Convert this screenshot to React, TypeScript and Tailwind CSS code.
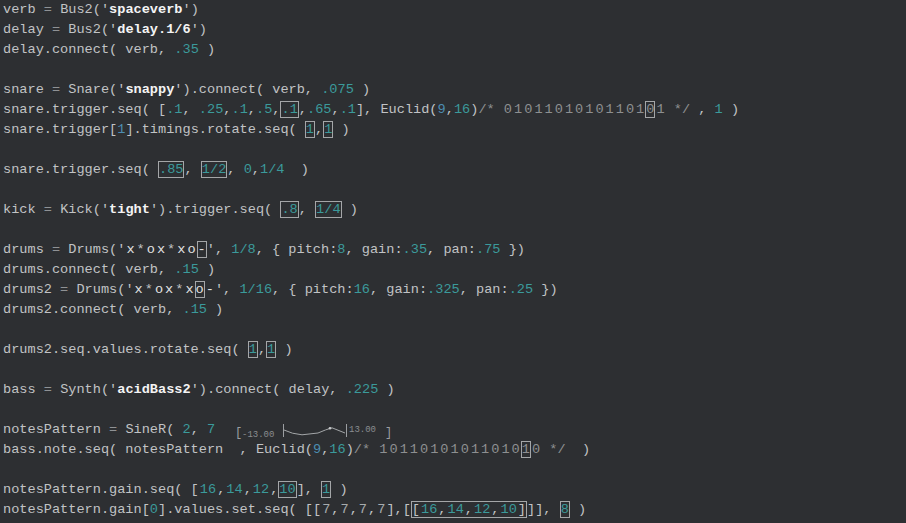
import clsx from "clsx";

type Kind = "d" | "n" | "b" | "s" | "p" | "c" | "g" | "o";
type Tok = { t?: string; k?: Kind; box?: boolean; cell?: boolean; sub?: Seg[] };
type Seg = string | Tok;

const tone: Record<Kind, string> = {
  d: "text-[#c1c3c5]",
  n: "text-[#3b9a9b]",
  b: "text-[#4c8eb2]",
  s: "text-[#f4f4f4] font-bold",
  p: "text-[#e2e2e2]",
  c: "text-[#8d8f91]",
  g: "text-[#a7abad]",
  o: "text-[#8f9295]",
};

const EQ: Tok = { t: "=", k: "o" };
const s = (t: string): Tok => ({ t, k: "s" });
const n = (t: string): Tok => ({ t, k: "n" });
const b = (t: string): Tok => ({ t, k: "b" });
const bx = (t: string): Tok => ({ t, k: "n", box: true });
const cl = (t: string): Tok => ({ t, k: "n", cell: true });
const cg = (t: string): Tok => ({ t, k: "g", cell: true });

// euclid annotation: every digit sits in its own 1px cell, the playing one is boxed
const comment = (bits: string, active: number): Seg[] => [
  { t: "/* ", k: "c" },
  ...bits.split("").map((d, i) => ({ t: d, k: "c" as Kind, box: i === active, cell: i !== active })),
  { t: " */", k: "c" },
];

const pattern = (str: string, active: number): Seg[] =>
  str.split("").map((ch, i) => ({
    t: ch,
    k: (ch === "*" ? "d" : "p") as Kind,
    box: i === active,
    cell: i !== active,
  }));

const lines: (Seg[] | "widget")[] = [
  ["verb ", EQ, " Bus2('", s("spaceverb"), "')"],
  ["delay ", EQ, " Bus2('", s("delay.1/6"), "')"],
  ["delay.connect( verb, ", n(".35"), " )"],
  [],
  ["snare ", EQ, " Snare('", s("snappy"), "').connect( verb, ", n(".075"), " )"],
  [
    "snare.trigger.seq( [", n(".1"), ", ", n(".25"), ",", n(".1"), ",", n(".5"), ",", bx(".1"), ",", n(".65"), ",", n(".1"),
    "], Euclid(", b("9"), ",", n("16"), ")", ...comment("0101101010110101", 14), " , ", n("1"), " )",
  ],
  ["snare.trigger[", b("1"), "].timings.rotate.seq( ", bx("1"), ",", bx("1"), " )"],
  [],
  ["snare.trigger.seq( ", bx(".85"), ", ", bx("1/2"), ", ", n("0"), ",", n("1/4"), "  )"],
  [],
  ["kick ", EQ, " Kick('", s("tight"), "').trigger.seq( ", bx(".8"), ", ", bx("1/4"), " )"],
  [],
  [
    "drums ", EQ, " Drums('", ...pattern("x*ox*xo-", 7), "', ", n("1/8"), ", { pitch:", n("8"), ", gain:", n(".35"),
    ", pan:", n(".75"), " })",
  ],
  ["drums.connect( verb, ", n(".15"), " )"],
  [
    "drums2 ", EQ, " Drums('", ...pattern("x*ox*xo-", 6), "', ", n("1/16"), ", { pitch:", n("16"), ", gain:", n(".325"),
    ", pan:", n(".25"), " })",
  ],
  ["drums2.connect( verb, ", n(".15"), " )"],
  [],
  ["drums2.seq.values.rotate.seq( ", bx("1"), ",", bx("1"), " )"],
  [],
  ["bass ", EQ, " Synth('", s("acidBass2"), "').connect( delay, ", n(".225"), " )"],
  [],
  "widget",
  [
    "bass.note.seq( notesPattern  , Euclid(", b("9"), ",", n("16"), ")", ...comment("1011010101101010", 14), "  )",
  ],
  [],
  ["notesPattern.gain.seq( [", cl("16"), ",", cl("14"), ",", cl("12"), ",", bx("10"), "], ", bx("1"), " )"],
  [
    "notesPattern.gain[", n("0"), "].values.set.seq( [[", cg("7"), ",", cg("7"), ",", cg("7"), ",", cg("7"), "],[",
    { box: true, sub: ["[", cl("16"), ",", cl("14"), ",", cl("12"), ",", cl("10"), "]"] },
    "]], ", bx("8"), " )",
  ],
];

function Piece({ seg }: { seg: Seg }) {
  if (typeof seg === "string") return <span>{seg}</span>;
  return (
    <span
      className={clsx(
        tone[seg.k ?? "d"],
        seg.box && "border border-[#a4a6a8]",
        seg.cell && "border border-transparent"
      )}
    >
      {seg.sub ? seg.sub.map((x, i) => <Piece key={i} seg={x} />) : seg.t}
    </span>
  );
}

// SineR sparkline that gibber draws in place of the closing paren
function SineWidget() {
  return (
    <svg width="162" height="20" viewBox="0 0 162 20" className="inline-block align-top">
      <g fontFamily="'Liberation Mono', monospace" fill="#9b9ea1">
        <text x="3" y="16" fontSize="12">[</text>
        <text x="10" y="16.5" fontSize="9" fill="#8a8d90">-13.00</text>
        <text x="117" y="12" fontSize="9" fill="#8a8d90">13.00</text>
        <text x="153" y="16" fontSize="12">]</text>
      </g>
      <line x1="51.5" y1="4" x2="51.5" y2="17" stroke="#9b9ea1" />
      <line x1="114.5" y1="4" x2="114.5" y2="17" stroke="#9b9ea1" />
      <path d="M52 10 Q60 14 70 14.8 L86 13 Q94 9.5 100 7.8 L113 13" stroke="#a3a6a8" strokeWidth="1" fill="none" />
      <circle cx="98" cy="8.2" r="1.3" fill="#c8cacc" />
    </svg>
  );
}

export default function App() {
  return (
    <div className="w-[906px] h-[523px] overflow-hidden bg-[#2d2f32] pl-[3px] font-['Liberation_Mono',monospace] text-[13.6px] leading-[20px] text-[#c1c3c5]">
      {lines.map((line, i) =>
        line === "widget" ? (
          <div key={i} className="h-[20px] whitespace-pre">
            <span>notesPattern </span>
            <Piece seg={EQ} />
            <span> SineR( </span>
            <Piece seg={n("2")} />
            <span>, </span>
            <Piece seg={n("7")} />
            <span>  </span>
            <SineWidget />
          </div>
        ) : (
          <div key={i} className="h-[20px] whitespace-pre">
            {line.map((seg, j) => (
              <Piece key={j} seg={seg} />
            ))}
          </div>
        )
      )}
    </div>
  );
}
